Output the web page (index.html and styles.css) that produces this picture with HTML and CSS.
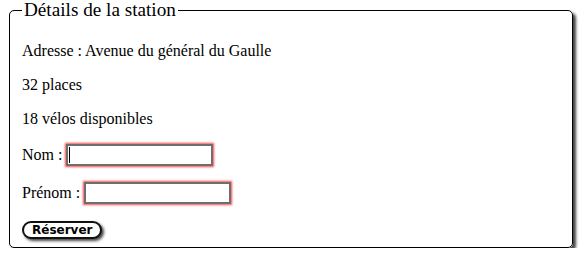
FILE: index.html
```html
<!DOCTYPE html>
<html lang="fr">
<head>
<meta charset="utf-8">
<title>Détails de la station</title>
<link rel="stylesheet" href="styles.css">
</head>
<body>
<form class="booking">
  <fieldset class="station">
    <legend class="station-title">Détails de la station</legend>
    <p class="info">Adresse : Avenue du général du Gaulle</p>
    <p class="info">32 places</p>
    <p class="info">18 vélos disponibles</p>
    <p class="field"><label for="nom">Nom :</label> <span class="input-wrap"><input class="text-input" type="text" id="nom" required><span class="caret" aria-hidden="true"></span></span></p>
    <p class="field"><label for="prenom">Prénom :</label> <span class="input-wrap"><input class="text-input" type="text" id="prenom" required></span></p>
    <button class="reserve" type="button">Réserver</button>
  </fieldset>
</form>
</body>
</html>
```
FILE: styles.css
```css
html, body {
  background: #ffffff;
}
body {
  margin: 0;
  font-family: "Liberation Serif", "Times New Roman", serif;
  font-size: 16px;
  color: #000000;
}
.booking {
  margin: 0;
}
.station {
  margin: 0 12px 0 9px;
  padding: 5.6px 12px 8px 12px;
  border: 1px solid #000000;
  border-radius: 5px;
  box-shadow: 3px 3px 3px #444444;
  background: #ffffff;
}
.station-title {
  font-size: 19.2px;
  line-height: 20px;
  padding: 0 2px;
}
.info,
.field {
  margin: 16px 0;
}
.input-wrap {
  position: relative;
  display: inline-block;
}
.text-input {
  box-sizing: border-box;
  width: 147px;
  height: 22px;
  padding: 1px 2px;
  border: 2px solid #6e6e6e;
  font-family: "Liberation Sans", Arial, sans-serif;
  font-size: 13.33px;
  background: #ffffff;
  box-shadow: 0 0 2px 1px #ff4a4a;
  outline: none;
  vertical-align: baseline;
}
.caret {
  position: absolute;
  left: 3px;
  top: 3px;
  width: 1px;
  height: 16px;
  background: #000000;
}
.reserve {
  box-sizing: border-box;
  height: 18px;
  padding: 0 8px;
  border: 2px solid #111111;
  border-radius: 10px;
  background: #ffffff;
  box-shadow: 2px 2px 3px #444444;
  font-family: "DejaVu Sans", Verdana, sans-serif;
  font-weight: bold;
  font-size: 12px;
  line-height: 14px;
  color: #000000;
}
```
